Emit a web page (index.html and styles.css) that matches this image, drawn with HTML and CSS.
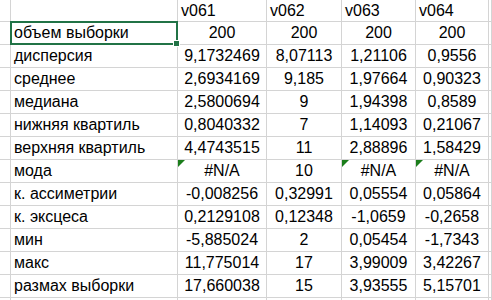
FILE: index.html
```html
<!DOCTYPE html>
<html lang="ru">
<head>
<meta charset="utf-8">
<link rel="stylesheet" href="styles.css">
</head>
<body>
<div class="sheet">
  <div class="c"></div><div class="c"></div><div class="c h">v061</div><div class="c h">v062</div><div class="c h">v063</div><div class="c h">v064</div><div class="c"></div>

  <div class="c"></div><div class="c l">объем выборки</div><div class="c n">200</div><div class="c n">200</div><div class="c n">200</div><div class="c n">200</div><div class="c"></div>
  <div class="c"></div><div class="c l">дисперсия</div><div class="c n">9,1732469</div><div class="c n">8,07113</div><div class="c n">1,21106</div><div class="c n">0,9556</div><div class="c"></div>
  <div class="c"></div><div class="c l">среднее</div><div class="c n">2,6934169</div><div class="c n">9,185</div><div class="c n">1,97664</div><div class="c n">0,90323</div><div class="c"></div>
  <div class="c"></div><div class="c l">медиана</div><div class="c n">2,5800694</div><div class="c n">9</div><div class="c n">1,94398</div><div class="c n">0,8589</div><div class="c"></div>
  <div class="c"></div><div class="c l">нижняя квартиль</div><div class="c n">0,8040332</div><div class="c n">7</div><div class="c n">1,14093</div><div class="c n">0,21067</div><div class="c"></div>
  <div class="c"></div><div class="c l">верхняя квартиль</div><div class="c n">4,4743515</div><div class="c n">11</div><div class="c n">2,88896</div><div class="c n">1,58429</div><div class="c"></div>
  <div class="c"></div><div class="c l">мода</div><div class="c n warn">#N/A</div><div class="c n">10</div><div class="c n warn">#N/A</div><div class="c n warn">#N/A</div><div class="c"></div>
  <div class="c"></div><div class="c l">к. ассиметрии</div><div class="c n">-0,008256</div><div class="c n">0,32991</div><div class="c n">0,05554</div><div class="c n">0,05864</div><div class="c"></div>
  <div class="c"></div><div class="c l">к. эксцеса</div><div class="c n">0,2129108</div><div class="c n">0,12348</div><div class="c n">-1,0659</div><div class="c n">-0,2658</div><div class="c"></div>
  <div class="c"></div><div class="c l">мин</div><div class="c n">-5,885024</div><div class="c n">2</div><div class="c n">0,05454</div><div class="c n">-1,7343</div><div class="c"></div>
  <div class="c"></div><div class="c l">макс</div><div class="c n">11,775014</div><div class="c n">17</div><div class="c n">3,99009</div><div class="c n">3,42267</div><div class="c"></div>
  <div class="c"></div><div class="c l">размах выборки</div><div class="c n">17,660038</div><div class="c n">15</div><div class="c n">3,93555</div><div class="c n">5,15701</div><div class="c"></div>
  <div class="c"></div><div class="c"></div><div class="c"></div><div class="c"></div><div class="c"></div><div class="c"></div><div class="c"></div>

  <div class="sel"></div>
  <div class="handle"></div>
</div>
</body>
</html>
```

FILE: styles.css
```css
html, body {
  margin: 0;
  padding: 0;
  background: #ffffff;
}

.sheet {
  position: relative;
  width: 492px;
  height: 300px;
  overflow: hidden;
  display: grid;
  grid-template-columns: 11px 167px 89px 75px 74px 73px 1fr;
  grid-template-rows: 22px repeat(12, 23px) 23px;
  font-family: "Liberation Sans", Arial, sans-serif;
  font-size: 16px;
  color: #000000;
}

.c {
  box-sizing: border-box;
  border-right: 1px solid #d4d4d4;
  border-bottom: 1px solid #d4d4d4;
  line-height: 22px;
  white-space: nowrap;
  overflow: visible;
  position: relative;
}

.h {
  line-height: 21px;
  padding-left: 3px;
}

.l {
  padding-left: 3px;
}

.n {
  text-align: center;
}

.warn::before {
  content: "";
  position: absolute;
  left: 0;
  top: 0;
  width: 0;
  height: 0;
  border-top: 7px solid #1b7d1b;
  border-right: 7px solid transparent;
}

.sel {
  position: absolute;
  left: 10px;
  top: 21px;
  width: 168px;
  height: 24px;
  box-sizing: border-box;
  border: 2px solid #217346;
}

.handle {
  position: absolute;
  left: 173px;
  top: 40px;
  width: 5px;
  height: 5px;
  background: #217346;
  border: 1px solid #ffffff;
}
```
